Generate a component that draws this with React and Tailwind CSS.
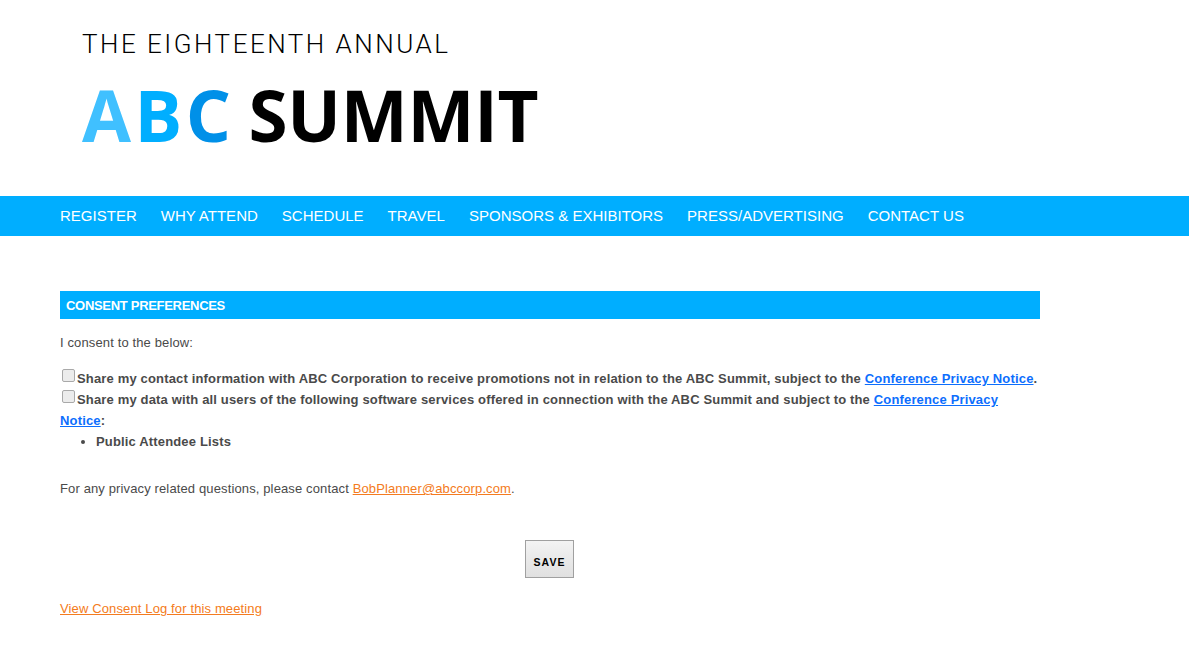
import React from 'react';

const navItems = ['REGISTER', 'WHY ATTEND', 'SCHEDULE', 'TRAVEL', 'SPONSORS & EXHIBITORS', 'PRESS/ADVERTISING', 'CONTACT US'];

function Check() {
  return <input type="checkbox" className="appearance-none w-[13px] h-[13px] ml-[2px] mr-[2px] align-[1px] bg-[#ececec] border border-[#a9a9a9] rounded-[2px]" />;
}

function PrivacyLink({ children }) {
  return <a href="#" className="text-[#0d6efd] underline">{children}</a>;
}

export default function App() {
  return (
    <div className="min-h-[656px] bg-white font-['Liberation_Sans',Arial,sans-serif] text-[#4a4a4a]">
      {/* Logo */}
      <header className="h-[196px] pl-[82px] pt-[26px]">
        <div className="font-['Roboto',sans-serif] font-light text-[26px] leading-[36px] tracking-[2.5px] text-black">THE EIGHTEENTH ANNUAL</div>
        <div className="mt-[11px] font-['Open_Sans',sans-serif] font-bold text-[71px] leading-[84px] tracking-[-0.2px] text-black whitespace-nowrap">
          <span className="text-[#40c0ff] tracking-[3.5px]">A</span>
          <span className="text-[#00aeff] tracking-[3.5px]">B</span>
          <span className="text-[#0090e8] tracking-[-0.8px]">C</span> SUMMIT
        </div>
      </header>

      <nav className="h-10 bg-[#00aeff] pl-[60px] flex items-center gap-6 text-[15px] tracking-[0.01px] text-white">
        {navItems.map((item) => (
          <a key={item} href="#" className="whitespace-nowrap">{item}</a>
        ))}
      </nav>

      <main className="w-[984px] ml-[60px] pt-[55px] text-[13px] leading-[21px] tracking-[0.13px]">
        <h2 className="w-[980px] h-7 bg-[#00aeff] pl-[6px] flex items-center text-[13px] font-bold text-white tracking-[-0.3px]">CONSENT PREFERENCES</h2>
        <p className="mt-[13px]">I consent to the below:</p>
        <div className="mt-[15px] font-bold tracking-[0.16px]">
          <div><Check />Share my contact information with ABC Corporation to receive promotions not in relation to the ABC Summit, subject to the <PrivacyLink>Conference Privacy Notice</PrivacyLink>.</div>
          <div><Check />Share my data with all users of the following software services offered in connection with the ABC Summit and subject to the <PrivacyLink>Conference Privacy Notice</PrivacyLink>:</div>
          <ul className="list-disc pl-9">
            <li>Public Attendee Lists</li>
          </ul>
        </div>
        <p className="mt-[26px]">For any privacy related questions, please contact <a href="#" className="text-[#f47b20] underline">BobPlanner@abccorp.com</a>.</p>
        <div className="mt-[41px] w-[980px] flex justify-center pr-[1px]">
          <button className="w-[49px] h-[38px] pt-[6px] bg-gradient-to-b from-[#f3f3f3] to-[#e0e0e0] border border-[#a0a0a0] text-[10.5px] font-bold text-black tracking-[1px]">SAVE</button>
        </div>
        <p className="mt-[20px]"><a href="#" className="text-[#f47b20] underline">View Consent Log for this meeting</a></p>
      </main>
    </div>
  );
}
